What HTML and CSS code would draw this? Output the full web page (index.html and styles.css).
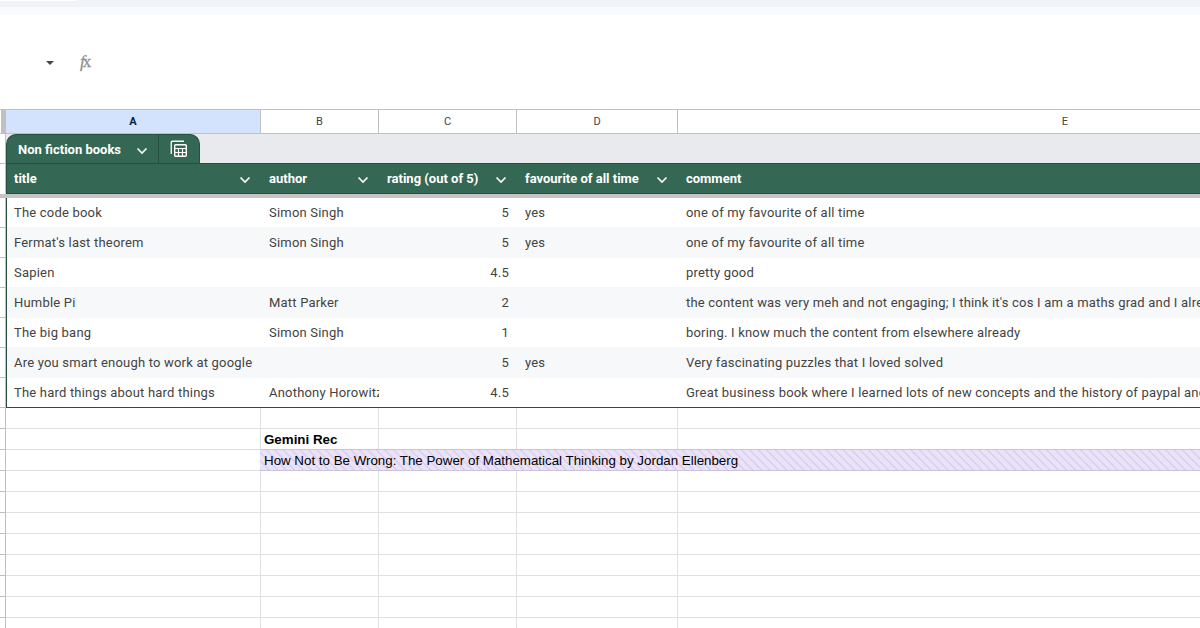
FILE: index.html
```html
<!DOCTYPE html>
<html lang="en">
<head>
  <meta charset="UTF-8">
  <title>Books</title>
  <link rel="stylesheet" href="styles.css">
</head>
<body>
  <svg width="0" height="0" class="defs">
    <symbol id="chevron" viewBox="0 0 12 8">
      <path d="M1.5 1.5 L6 6 L10.5 1.5" fill="none" stroke="currentColor" stroke-width="1.6"/>
    </symbol>
  </svg>

  <div class="toolbar"><div class="toolbar-end"></div></div>
  <div class="toolbar-gap"></div>
  <div class="formula-bar">
    <span class="name-arrow"></span>
    <span class="fx"><i>f</i><b>x</b></span>
  </div>

  <div class="sheet">
    <div class="row col-head">
      <div class="gutter"></div>
      <div class="selected">A</div>
      <div>B</div>
      <div>C</div>
      <div>D</div>
      <div>E</div>
    </div>

    <div class="tab-row">
      <div class="gutter"></div>
      <div class="tab">
        <div class="tab-name">
          <span>Non fiction books</span>
          <svg class="chevron"><use href="#chevron"/></svg>
        </div>
        <div class="tab-icon">
          <svg width="18" height="18" viewBox="0 0 18 18" fill="none" stroke="#fff">
            <path d="M1.25 14 V2.5 Q1.25 1.25 2.5 1.25 H14" stroke-width="1.3"/>
            <rect x="4.7" y="4.7" width="11.6" height="11.6" rx="1" stroke-width="1.4"/>
            <path d="M5 8.5 H16 M5 12.5 H16 M8.5 8.5 V16 M12.5 8.5 V16" stroke-width="1.2"/>
          </svg>
        </div>
      </div>
    </div>

    <div class="row table-head">
      <div class="gutter"></div>
      <div>title<svg class="chevron"><use href="#chevron"/></svg></div>
      <div>author<svg class="chevron"><use href="#chevron"/></svg></div>
      <div>rating (out of 5)<svg class="chevron"><use href="#chevron"/></svg></div>
      <div>favourite of all time<svg class="chevron"><use href="#chevron"/></svg></div>
      <div>comment</div>
    </div>
    <div class="freeze-bar"></div>

    <div class="table-body">
      <div class="row">
        <div class="gutter"></div>
        <div>The code book</div><div>Simon Singh</div><div class="num">5</div><div>yes</div>
        <div>one of my favourite of all time</div>
      </div>
      <div class="row">
        <div class="gutter"></div>
        <div>Fermat's last theorem</div><div>Simon Singh</div><div class="num">5</div><div>yes</div>
        <div>one of my favourite of all time</div>
      </div>
      <div class="row">
        <div class="gutter"></div>
        <div>Sapien</div><div></div><div class="num">4.5</div><div></div>
        <div>pretty good</div>
      </div>
      <div class="row">
        <div class="gutter"></div>
        <div>Humble Pi</div><div>Matt Parker</div><div class="num">2</div><div></div>
        <div>the content was very meh and not engaging; I think it's cos I am a maths grad and I already</div>
      </div>
      <div class="row">
        <div class="gutter"></div>
        <div>The big bang</div><div>Simon Singh</div><div class="num">1</div><div></div>
        <div>boring. I know much the content from elsewhere already</div>
      </div>
      <div class="row">
        <div class="gutter"></div>
        <div>Are you smart enough to work at google</div><div></div><div class="num">5</div><div>yes</div>
        <div>Very fascinating puzzles that I loved solved</div>
      </div>
      <div class="row">
        <div class="gutter"></div>
        <div>The hard things about hard things</div><div>Anothony Horowitz</div><div class="num">4.5</div><div></div>
        <div>Great business book where I learned lots of new concepts and the history of paypal and</div>
      </div>
    </div>

    <div class="cells">
      <div class="row"><div class="gutter"></div><div></div><div></div><div></div><div></div><div></div></div>
      <div class="row before-rec"><div class="gutter"></div><div></div><div class="strong">Gemini Rec</div><div></div><div></div><div></div></div>
      <div class="row"><div class="gutter"></div><div></div><div class="rec">How Not to Be Wrong: The Power of Mathematical Thinking by Jordan Ellenberg</div></div>
      <div class="row"><div class="gutter"></div><div></div><div></div><div></div><div></div><div></div></div>
      <div class="row"><div class="gutter"></div><div></div><div></div><div></div><div></div><div></div></div>
      <div class="row"><div class="gutter"></div><div></div><div></div><div></div><div></div><div></div></div>
      <div class="row"><div class="gutter"></div><div></div><div></div><div></div><div></div><div></div></div>
      <div class="row"><div class="gutter"></div><div></div><div></div><div></div><div></div><div></div></div>
      <div class="row"><div class="gutter"></div><div></div><div></div><div></div><div></div><div></div></div>
      <div class="row"><div class="gutter"></div><div></div><div></div><div></div><div></div><div></div></div>
      <div class="row"><div class="gutter"></div><div></div><div></div><div></div><div></div><div></div></div>
    </div>
  </div>
</body>
</html>
```
FILE: styles.css
```css
* {
  box-sizing: border-box;
}
body {
  margin: 0;
  width: 1200px;
  height: 628px;
  overflow: hidden;
  background: #fff;
  font-family: Roboto, Arial, sans-serif;
  font-size: 13px;
  color: #434343;
}
.defs {
  display: block;
}

/* top bars */
.toolbar {
  height: 7px;
  background: #f0f3f8;
}
.toolbar-end {
  width: 76px;
  height: 1px;
  background: #fff;
}
.toolbar-gap {
  height: 8px;
  background: #f9fbfe;
}
.formula-bar {
  display: flex;
  align-items: center;
  height: 94px;
  padding-left: 46px;
}
.name-arrow {
  border: 4px solid transparent;
  border-top-color: #444746;
  border-bottom: 0;
  margin-top: 1px;
}
.fx {
  margin-left: 26px;
  font: 17px "Liberation Serif", serif;
  color: #8f9192;
  -webkit-text-stroke: 0.3px #8f9192;
}
.fx b {
  font-weight: normal;
  margin-left: -2px;
}

/* sheet */
.sheet {
  width: 1453px;
}
.row {
  display: grid;
  grid-template-columns: 6px 255px 118px 138px 161px 775px;
}
.row > div {
  overflow: hidden;
  white-space: nowrap;
}
.gutter {
  border-right: 1px solid #c0c0c0;
}
.col-head {
  height: 25px;
  border-top: 1px solid #c0c0c0;
  border-bottom: 1px solid #c0c0c0;
  font-size: 11px;
  line-height: 23px;
  text-align: center;
}
.col-head > div {
  border-right: 1px solid #c0c0c0;
}
.col-head .gutter {
  background: linear-gradient(to right, #fff 1px, #c0c0c0 1px);
}
.col-head .selected {
  background: #d3e3fd;
  color: #041e49;
  font-weight: bold;
}

/* table tab and header */
.tab-row {
  display: flex;
  height: 29px;
  background: #e8eaed;
}
.tab-row .gutter {
  width: 6px;
  background: #fff;
}
.tab {
  display: flex;
  width: 194px;
  background: #356854;
  border: 1px solid #284e3f;
  border-bottom: 0;
  border-radius: 10px 10px 0 0;
  color: #fff;
}
.tab-name {
  display: flex;
  align-items: center;
  justify-content: space-between;
  width: 152px;
  padding: 0 10px 0 11px;
  border-right: 1px solid #284e3f;
  font-weight: bold;
}
.tab-icon {
  flex: 1;
  display: flex;
  align-items: center;
  justify-content: center;
}
.chevron {
  display: block;
  width: 12px;
  height: 8px;
  margin-top: 3px;
}
.table-head {
  height: 31px;
}
.table-head > div {
  display: flex;
  align-items: center;
  justify-content: space-between;
  padding: 0 10px 0 8px;
  background: #356854;
  border-top: 1px solid #284e3f;
  border-bottom: 1px solid #284e3f;
  color: #fff;
  font-weight: bold;
}
.table-head > .gutter {
  padding: 0;
  background: #fff;
  border-top-color: #c0c0c0;
  border-bottom-color: #fff;
}
.table-head > .gutter + div {
  border-left: 1px solid #284e3f;
  padding-left: 7px;
}
.freeze-bar {
  height: 4px;
  background: #c4c4c4;
}

/* table rows */
.table-body .row {
  height: 29px;
  line-height: 29px;
  letter-spacing: 0.2px;
}
.table-body .row > div {
  padding-left: 8px;
}
.table-body .row > .gutter {
  padding: 0;
}
.table-body .gutter + div {
  border-left: 1px solid #284e3f;
  padding-left: 7px !important;
}
.table-body .row:nth-child(even) {
  height: 31px;
  line-height: 31px;
  background: #f6f8f9;
}
.table-body .row:nth-child(even) .gutter {
  background: #fff;
  border-top: 1px solid #c0c0c0;
  border-bottom: 1px solid #c0c0c0;
}
.table-body .row:last-child {
  height: 30px;
}
.table-body .row:last-child > div {
  border-bottom: 1px solid #284e3f;
}
.table-body .row:last-child > .gutter {
  border-bottom-color: #c0c0c0;
}
.table-body .num {
  text-align: right;
  padding-right: 8px;
}

/* plain cells */
.cells .row {
  height: 21px;
  font-family: "Liberation Sans", Arial, sans-serif;
  font-size: 13.33px;
  line-height: 21px;
  color: #000;
}
.cells .row > div {
  border-right: 1px solid #e0e0e0;
  border-bottom: 1px solid #e0e0e0;
  padding-left: 3px;
}
.cells .row > .gutter {
  padding: 0;
  border-color: #c0c0c0;
}
.cells .strong {
  font-weight: bold;
}
.cells .row > .rec {
  grid-column: 3 / -1;
  margin: -1px 0 0 -1px;
  padding-left: 4px;
  border-top: 1px solid #cbc3d9;
  border-bottom: 1px solid #cbc3d9;
  background: repeating-linear-gradient(45deg, #d8cff7 0, #d8cff7 1px, #ebe3f5 1.5px, #ebe3f5 5.5px, #d8cff7 6px);
}
```
